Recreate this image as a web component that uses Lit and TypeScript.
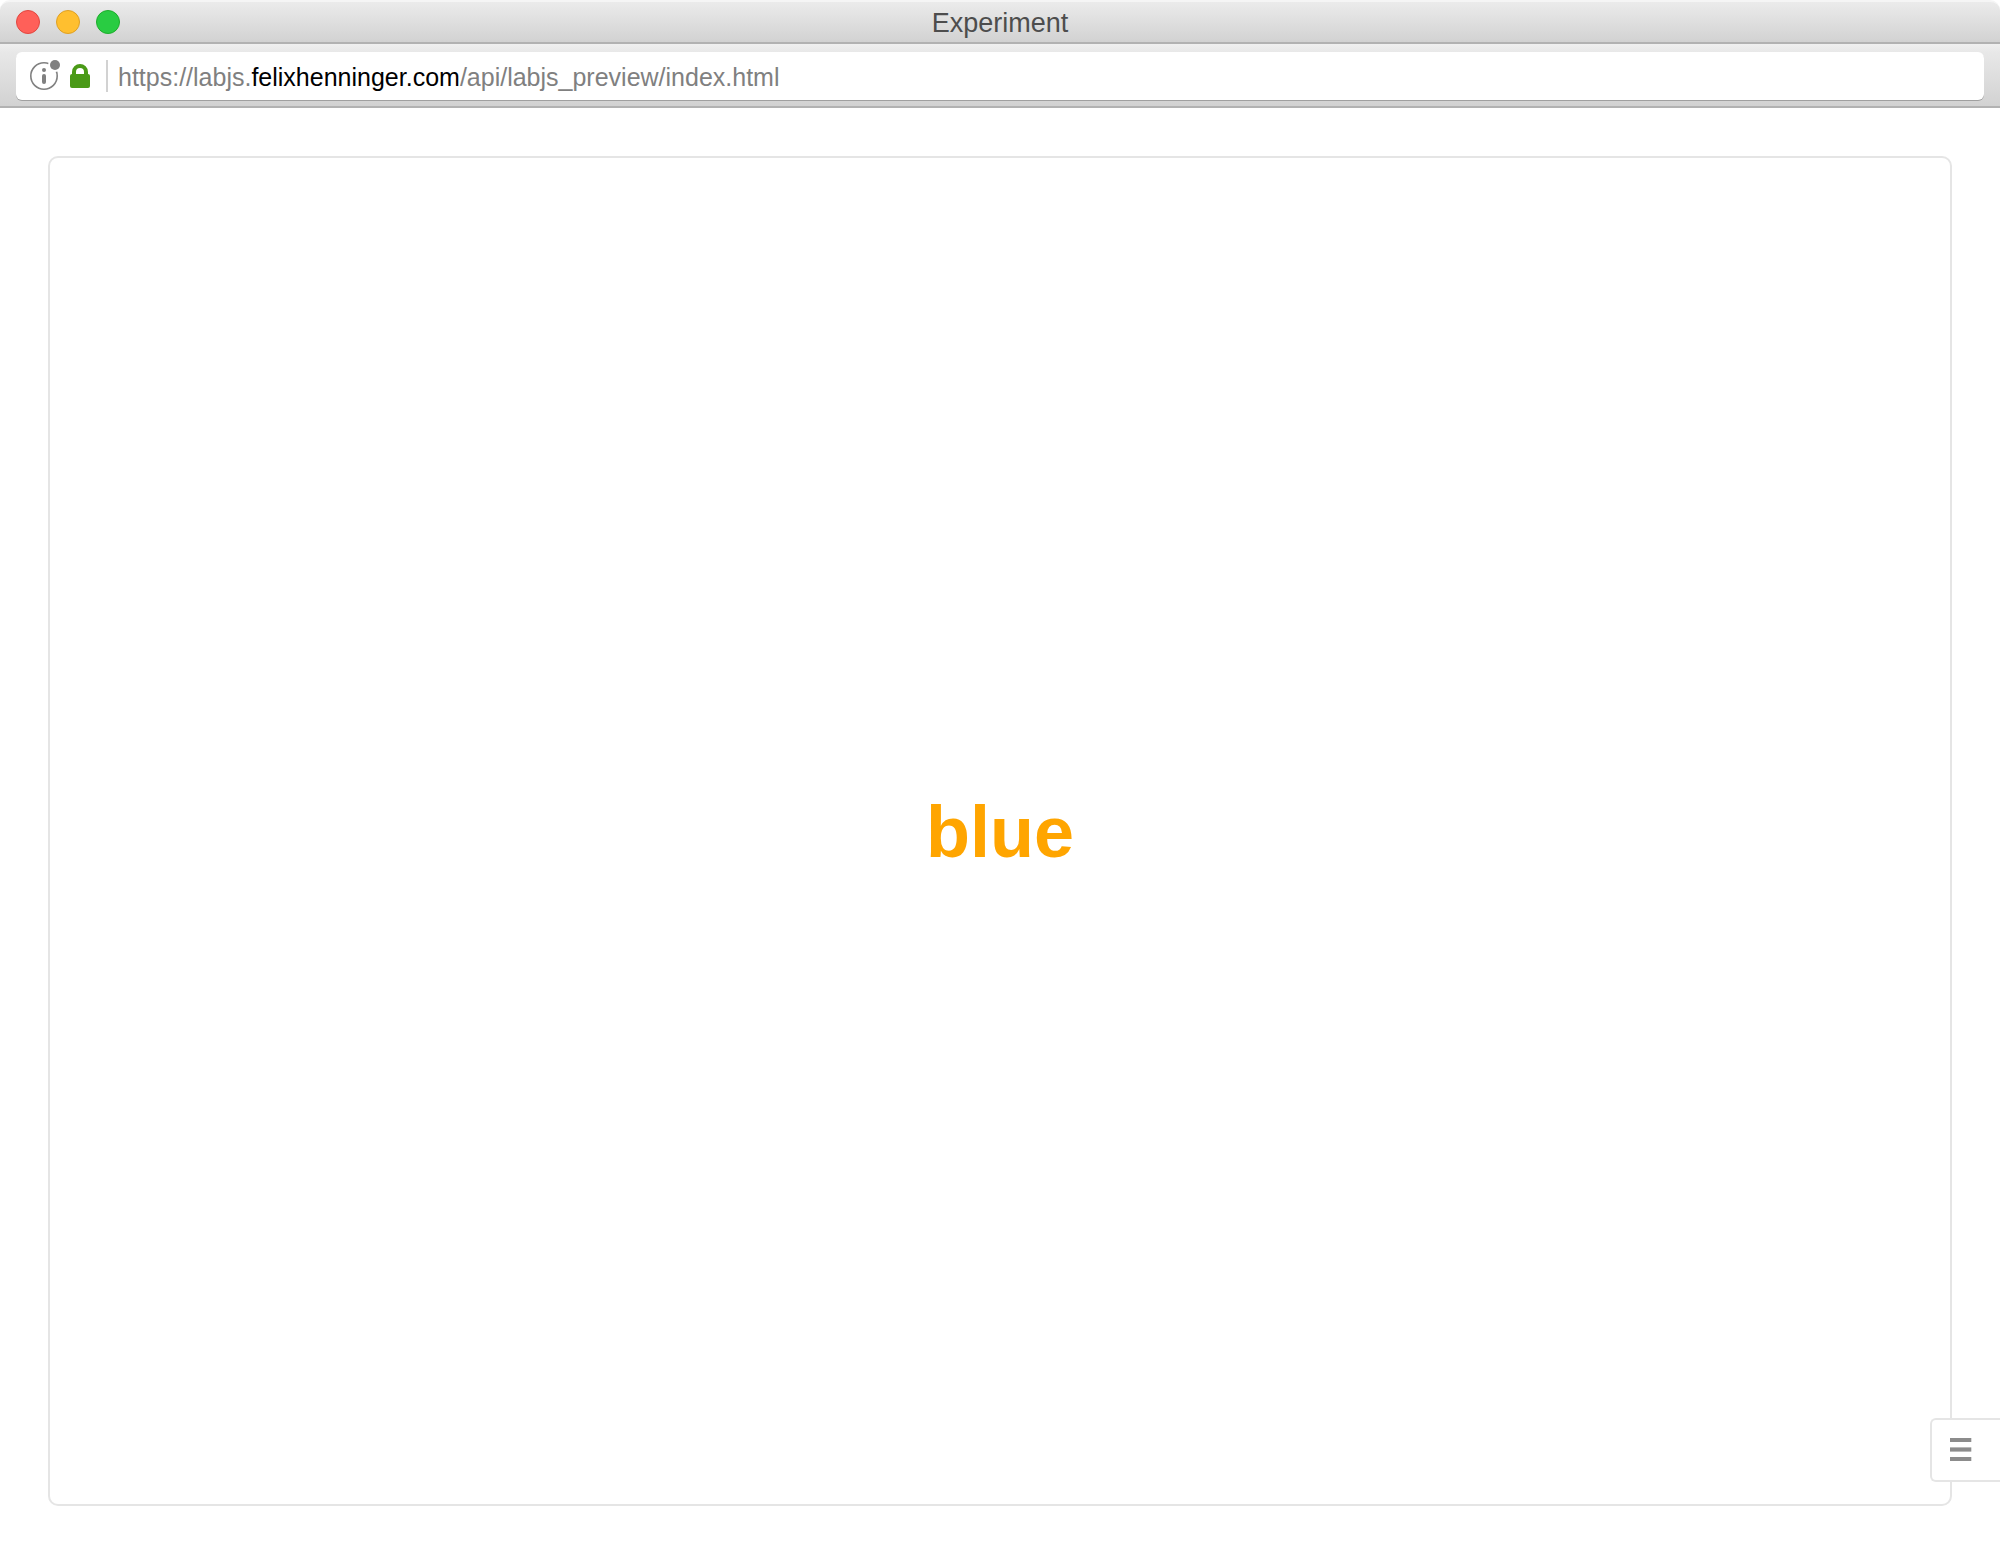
import { LitElement, html, css } from "lit";
import { customElement, property } from "lit/decorators.js";

@customElement("window-titlebar")
export class WindowTitlebar extends LitElement {
  static styles = css`
    :host {
      display: block;
    }
    .titlebar {
      display: grid;
      grid-template-columns: 1fr auto 1fr;
      align-items: center;
      box-sizing: border-box;
      height: 44px;
      padding: 0 16px;
      border-top: 2px solid #f5f5f5;
      border-bottom: 2px solid #b2b2b2;
      border-radius: 10px 10px 0 0;
      background: linear-gradient(#ebebeb, #d2d2d2);
    }
    .lights {
      display: flex;
      gap: 16px;
    }
    .light {
      box-sizing: border-box;
      width: 24px;
      height: 24px;
      padding: 0;
      border: 1px solid;
      border-radius: 50%;
    }
    .close {
      background: #ff6059;
      border-color: #e2463f;
    }
    .minimise {
      background: #ffbf2f;
      border-color: #dfa023;
    }
    .zoom {
      background: #29cc42;
      border-color: #1dad2b;
    }
    .title {
      margin: 0;
      padding-top: 2px;
      font-size: 27px;
      font-weight: 400;
      line-height: 32px;
      color: #4d4d4d;
    }
  `;

  @property() heading = "";

  render() {
    return html`
      <header class="titlebar">
        <div class="lights">
          <button class="light close" type="button" aria-label="Close"></button>
          <button class="light minimise" type="button" aria-label="Minimise"></button>
          <button class="light zoom" type="button" aria-label="Zoom"></button>
        </div>
        <h1 class="title">${this.heading}</h1>
      </header>
    `;
  }
}

@customElement("address-bar")
export class AddressBar extends LitElement {
  static styles = css`
    :host {
      display: block;
    }
    .toolbar {
      box-sizing: border-box;
      height: 64px;
      padding: 8px 16px 6px;
      border-bottom: 2px solid #b2b2b2;
      background: linear-gradient(#f0f0f0, #e8e8e8 8px, #d2d2d2);
    }
    .field {
      display: flex;
      align-items: center;
      height: 48px;
      border-radius: 6px;
      background: #fff;
      box-shadow: 0 1px 0 #a0a0a0;
    }
    .badge {
      display: flex;
      padding: 0;
      border: 0;
      background: none;
    }
    .info {
      margin-left: 12px;
    }
    .lock {
      margin-left: 8px;
    }
    .divider {
      width: 2px;
      height: 32px;
      margin: 0 10px 0 16px;
      background: #d2d2d2;
    }
    .url {
      flex: 1;
      padding-top: 2px;
      font-size: 25px;
      line-height: 32px;
      white-space: nowrap;
      color: #808080;
      outline: none;
    }
    .domain {
      color: #000;
    }
  `;

  @property() prefix = "";
  @property() domain = "";
  @property() path = "";

  render() {
    return html`
      <nav class="toolbar" aria-label="Location">
        <div class="field">
          <button class="badge info" type="button" aria-label="Site information">
            <svg width="34" height="32" viewBox="0 0 34 32" aria-hidden="true">
              <circle cx="16" cy="16" r="13.200" fill="none" stroke="#808080" stroke-width="1.600" />
              <circle cx="27" cy="5" r="7" fill="#fff" />
              <circle cx="27" cy="5" r="5" fill="#808080" />
              <circle cx="16" cy="10" r="2" fill="#808080" />
              <rect x="14" y="14" width="4" height="10" rx="2" fill="#808080" />
            </svg>
          </button>
          <button class="badge lock" type="button" aria-label="Secure connection">
            <svg width="20" height="26" viewBox="0 0 20 26" aria-hidden="true">
              <path d="M4 13V9a6 6 0 0 1 12 0V13" fill="none" stroke="#4a9a17" stroke-width="4" />
              <rect y="11" width="20" height="14" rx="2" fill="#4a9a17" />
            </svg>
          </button>
          <span class="divider"></span>
          <div class="url" role="textbox" contenteditable="true" spellcheck="false" aria-label="Address"><span>${this.prefix}</span><span class="domain">${this.domain}</span><span>${this.path}</span></div>
        </div>
      </nav>
    `;
  }
}

@customElement("experiment-screen")
export class ExperimentScreen extends LitElement {
  static styles = css`
    :host {
      display: flex;
      flex: 1;
    }
    .page {
      position: relative;
      display: flex;
      flex: 1;
      padding: 48px;
    }
    .frame {
      display: flex;
      flex: 1;
      align-items: center;
      justify-content: center;
      border: 2px solid #e5e5e5;
      border-radius: 10px;
    }
    .stimulus {
      margin: 0;
      padding-top: 2px;
      font-size: 72px;
      font-weight: 700;
      line-height: 80px;
      color: #ffa500;
    }
    .menu {
      position: absolute;
      right: 0;
      bottom: 72px;
      display: flex;
      align-items: center;
      box-sizing: border-box;
      width: 70px;
      height: 64px;
      padding: 0 18px;
      border: 2px solid #e5e5e5;
      border-right: 0;
      border-radius: 6px 0 0 6px;
      background: #fff;
    }
  `;

  @property() word = "";

  render() {
    return html`
      <main class="page">
        <section class="frame">
          <p class="stimulus">${this.word}</p>
        </section>
        <button class="menu" type="button" aria-label="Menu">
          <svg width="22" height="24" viewBox="0 0 22 24" fill="#8c8c8c" aria-hidden="true">
            <rect width="21.300" height="4" />
            <rect y="9.400" width="21.300" height="4.200" />
            <rect y="19" width="21.300" height="4" />
          </svg>
        </button>
      </main>
    `;
  }
}

@customElement("app-root")
export class AppRoot extends LitElement {
  static styles = css`
    :host {
      display: flex;
      flex-direction: column;
      min-height: 100vh;
      background: #fff;
      font-family: "Liberation Sans", Arial, sans-serif;
    }
  `;

  render() {
    return html`
      <window-titlebar heading="Experiment"></window-titlebar>
      <address-bar
        prefix="https://labjs."
        domain="felixhenninger.com"
        path="/api/labjs_preview/index.html"
      ></address-bar>
      <experiment-screen word="blue"></experiment-screen>
    `;
  }
}
